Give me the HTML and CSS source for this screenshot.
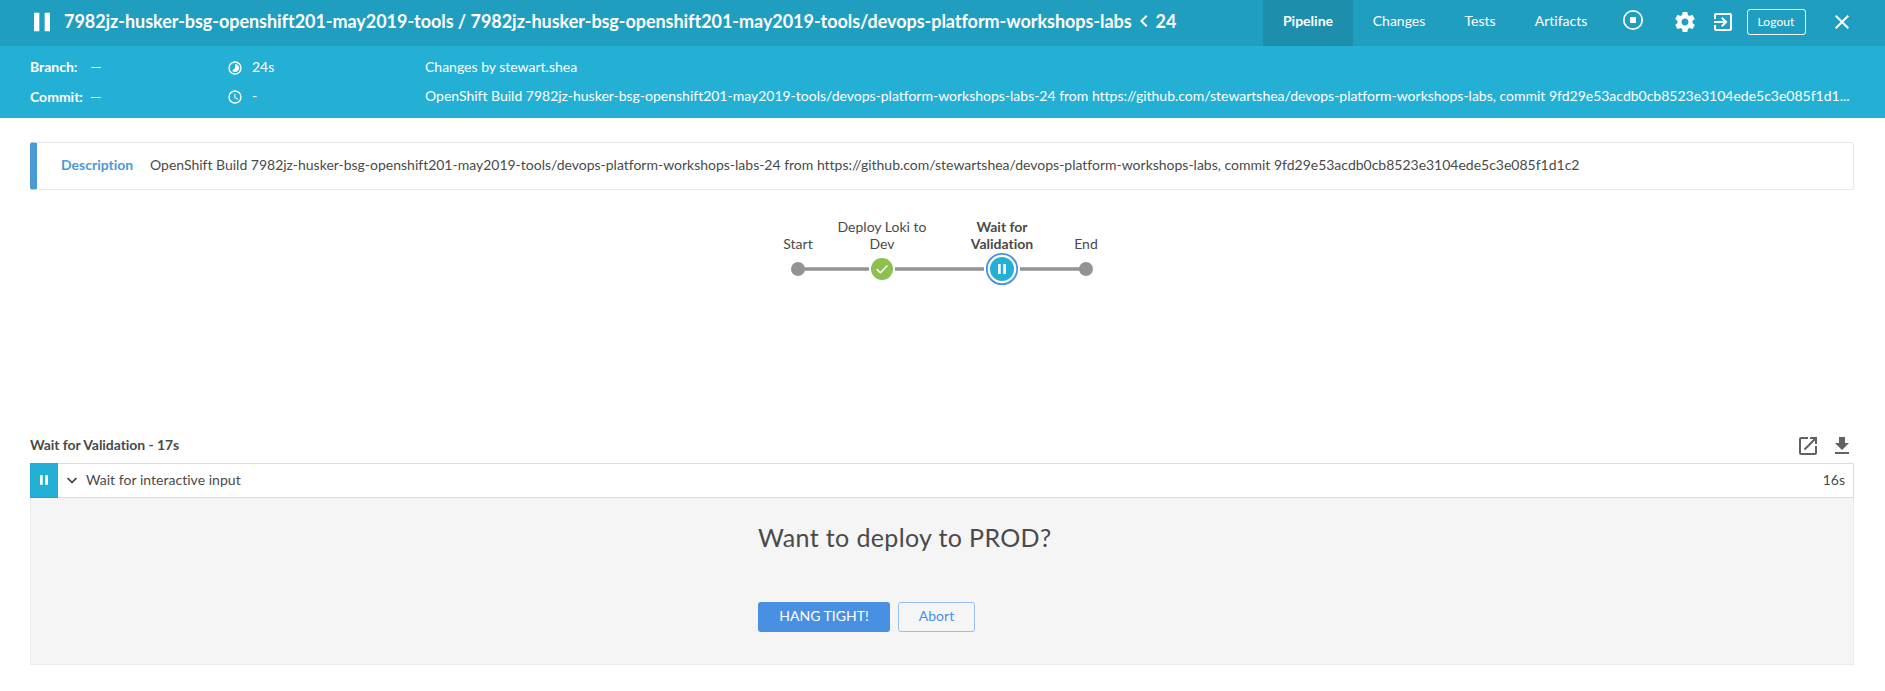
FILE: index.html
```html
<!DOCTYPE html>
<html lang="en">
<head>
<meta charset="utf-8">
<title>Pipeline run 24</title>
<link rel="stylesheet" href="styles.css">
</head>
<body>
<header class="topbar">
  <svg class="run-status" width="32" height="32" viewBox="0 0 24 24"><path d="M6 5h4v14H6zM14 5h4v14h-4z"/></svg>
  <h1 class="title"><span>7982jz-husker-bsg-openshift201-may2019-tools / 7982jz-husker-bsg-openshift201-may2019-tools/devops-platform-workshops-labs</span><svg class="chevron" width="24" height="24" viewBox="0 0 24 24"><path d="M15.4 7.4 14 6l-6 6 6 6 1.400-1.400L10.800 12z"/></svg><span>24</span></h1>
  <nav class="tabs">
    <a class="tab tab-active">Pipeline</a>
    <a class="tab tab-changes">Changes</a>
    <a class="tab tab-tests">Tests</a>
    <a class="tab tab-artifacts">Artifacts</a>
  </nav>
  <div class="actions">
    <svg class="stop" width="24" height="24" viewBox="0 0 24 24"><circle cx="12" cy="12" r="9.200" fill="none" stroke="#fff" stroke-width="1.700"/><path d="M9 9h6v6H9z"/></svg>
    <svg class="gear" width="24" height="24" viewBox="0 0 24 24"><path d="M19.43 12.98c.04-.32.07-.64.07-.98s-.03-.66-.07-.98l2.110-1.650c.19-.15.24-.42.12-.64l-2-3.460c-.12-.22-.39-.3-.61-.22l-2.490 1c-.52-.4-1.080-.73-1.690-.98l-.38-2.650C14.460 2.180 14.250 2 14 2h-4c-.25 0-.46.18-.49.42l-.38 2.650c-.61.25-1.170.59-1.690.98l-2.490-1c-.23-.09-.49 0-.61.22l-2 3.460c-.13.22-.07.49.12.64l2.110 1.650c-.04.32-.07.65-.07.98s.03.66.07.98l-2.110 1.650c-.19.15-.24.42-.12.64l2 3.460c.12.22.39.3.61.22l2.490-1c.52.4 1.080.73 1.690.98l.38 2.650c.03.24.24.42.49.42h4c.25 0 .46-.18.49-.42l.38-2.650c.61-.25 1.170-.59 1.690-.98l2.490 1c.23.09.49 0 .61-.22l2-3.460c.12-.22.07-.49-.12-.64l-2.110-1.650zM12 15.500c-1.930 0-3.500-1.570-3.500-3.500s1.570-3.500 3.500-3.500 3.500 1.570 3.500 3.500-1.570 3.500-3.500 3.500z"/></svg>
    <svg class="exit" width="24" height="24" viewBox="0 0 24 24"><path d="M10.090 15.590 11.500 17l5-5-5-5-1.410 1.410L12.670 11H3v2h9.670l-2.580 2.590zM19 3H5c-1.110 0-2 .9-2 2v4h2V5h14v14H5v-4H3v4c0 1.100.89 2 2 2h14c1.100 0 2-.9 2-2V5c0-1.100-.9-2-2-2z"/></svg>
    <button class="logout">Logout</button>
    <svg class="close" width="24" height="24" viewBox="0 0 24 24"><path d="M19 6.410 17.590 5 12 10.590 6.410 5 5 6.410 10.590 12 5 17.590 6.410 19 12 13.410 17.590 19 19 17.590 13.410 12z"/></svg>
  </div>
</header>

<section class="summary">
  <div class="col-source">
    <div class="line"><b class="key">Branch:</b><span class="dash-branch">—</span></div>
    <div class="line line-commit"><b class="key">Commit:</b><span class="dash-commit">—</span></div>
  </div>
  <div class="col-time">
    <div class="line"><svg width="16" height="16" viewBox="0 0 24 24"><path d="M16.240 7.750A5.970 5.970 0 0 0 12 6v6l-4.240 4.240c2.340 2.340 6.140 2.340 8.490 0a5.990 5.990 0 0 0-.01-8.490zM12 2a10 10 0 1 0 0 20 10 10 0 0 0 0-20zm0 18a8 8 0 1 1 0-16 8 8 0 0 1 0 16z"/></svg><span>24s</span></div>
    <div class="line"><svg width="16" height="16" viewBox="0 0 24 24"><path d="M12 2a10 10 0 1 0 0 20 10 10 0 0 0 0-20zm0 18a8 8 0 1 1 0-16 8 8 0 0 1 0 16zM12.500 7H11v6l5.250 3.150.75-1.230-4.500-2.670z"/></svg><span>-</span></div>
  </div>
  <div class="col-cause">
    <div class="line">Changes by stewart.shea</div>
    <div class="line long-text">OpenShift Build 7982jz-husker-bsg-openshift201-may2019-tools/devops-platform-workshops-labs-24 from https://github.com/stewartshea/devops-platform-workshops-labs, commit 9fd29e53acdb0cb8523e3104ede5c3e085f1d1...</div>
  </div>
</section>

<main class="content">
  <section class="description"><b class="description-label">Description</b><span class="long-text">OpenShift Build 7982jz-husker-bsg-openshift201-may2019-tools/devops-platform-workshops-labs-24 from https://github.com/stewartshea/devops-platform-workshops-labs, commit 9fd29e53acdb0cb8523e3104ede5c3e085f1d1c2</span></section>

  <section class="graph">
    <div class="labels">
      <span>Start</span>
      <span>Deploy Loki to<br>Dev</span>
      <span class="current">Wait for<br>Validation</span>
      <span>End</span>
    </div>
    <svg width="324" height="36" viewBox="0 0 324 36">
      <path d="M18 18h71M115 18h89M240 18h66" stroke="#949393" stroke-width="3.500"/>
      <circle cx="18" cy="18" r="7" fill="#949393"/>
      <circle cx="102" cy="18" r="11" fill="#8cc04f"/>
      <path d="m96.800 18.200 3.600 3.600 7-7.200" fill="none" stroke="#fff" stroke-width="1.500"/>
      <circle cx="222" cy="18" r="15.200" fill="#fff" stroke="#4a90e2" stroke-width="1.800"/>
      <circle cx="222" cy="18" r="12" fill="#24b0d5"/>
      <path d="M218 13h2.700v10H218zM223.300 13h2.700v10h-2.700z" fill="#fff"/>
      <circle cx="306" cy="18" r="7" fill="#949393"/>
    </svg>
  </section>

  <section class="log">
    <div class="log-head">
      <h2 class="log-title">Wait for Validation - 17s</h2>
      <div class="log-tools">
        <svg width="24" height="24" viewBox="0 0 24 24"><path d="M19 19H5V5h7V3H5a2 2 0 0 0-2 2v14a2 2 0 0 0 2 2h14c1.100 0 2-.9 2-2v-7h-2v7zM14 3v2h3.590l-9.830 9.830 1.410 1.410L19 6.410V10h2V3h-7z"/></svg>
        <svg width="24" height="24" viewBox="0 0 24 24"><path d="M19 9h-4V3H9v6H5l7 7 7-7zM5 18v2h14v-2H5z"/></svg>
      </div>
    </div>
    <div class="step">
      <div class="step-status"><svg width="16" height="16" viewBox="0 0 16 16"><path d="M4 3.200h2.700v9.600H4zM9.300 3.200H12v9.600H9.300z"/></svg></div>
      <svg class="step-arrow" width="20" height="20" viewBox="0 0 24 24"><path d="M7.410 7.840 12 12.420l4.590-4.580L18 9.250l-6 6-6-6z"/></svg>
      <span class="step-name">Wait for interactive input</span>
      <span class="step-time">16s</span>
    </div>
    <div class="input-panel">
      <h3 class="question">Want to deploy to PROD?</h3>
      <div class="buttons">
        <button class="btn btn-primary">HANG TIGHT!</button>
        <button class="btn btn-secondary">Abort</button>
      </div>
    </div>
  </section>
</main>
</body>
</html>
```
FILE: styles.css
```css
* { box-sizing: border-box; }
body {
  margin: 0;
  background: #fff;
  color: #4a4a4a;
  font: 14px/20px Lato, sans-serif;
  font-variant-ligatures: none;
}
svg { display: block; flex: none; }
h1, h2, h3 { margin: 0; }
button { font-family: inherit; font-variant-ligatures: none; }
.long-text { letter-spacing: -0.008px; }

.topbar {
  display: flex;
  height: 46px;
  padding-left: 26px;
  background: #209ebf;
  color: #fff;
}
.topbar svg { fill: #fff; }
.run-status { margin-top: 6px; }
.title {
  display: flex;
  align-items: center;
  height: 42px;
  margin-left: 6px;
  font-size: 18px;
  line-height: 24px;
  letter-spacing: -0.045px;
  white-space: nowrap;
}
.tabs { display: flex; margin-left: auto; }
.tab {
  width: 90px;
  padding-top: 11px;
  text-align: center;
}
.tab-active { background: #1d8eac; font-weight: 700; }
.tab-changes { width: 92px; }
.tab-tests { width: 70px; }
.tab-artifacts { width: 92px; }
.actions { display: flex; width: 278px; padding-top: 8px; }
.stop { margin-left: 13.500px; }
.gear { margin: 2px 0 0 28px; }
.exit { margin: 2px 0 0 14px; }
.logout {
  width: 59px;
  height: 26px;
  margin: 1px 0 0 12px;
  padding: 0 0 1px;
  border: 1px solid #fff;
  border-radius: 3px;
  background: transparent;
  color: #fff;
  font-size: 12px;
  letter-spacing: 0.1px;
}
.close { margin: 2px 0 0 24px; }

.summary {
  display: flex;
  height: 72px;
  padding: 11px 30px 0;
  background: #24b0d5;
  color: #fff;
}
.summary svg { margin-top: 2px; fill: #fff; }
.line { display: flex; align-items: center; height: 20px; margin-bottom: 9px; white-space: nowrap; }
.line-commit { margin-top: 10px; }
.col-source { width: 197px; }
.key { margin-right: 7px; }
.dash-branch { margin-left: 6px; }
.col-time { width: 198px; }
.col-time span { margin-left: 9px; }
.col-cause { flex: 1; min-width: 0; }

.content { padding: 24px 31px 0 30px; }
.description {
  display: flex;
  align-items: center;
  height: 48px;
  padding: 0 0 2px 24px;
  border: 1px solid #e6e7ec;
  border-left: 7px solid #4a9ad4;
  border-radius: 3px;
  white-space: nowrap;
}
.description-label { width: 89px; color: #4a9ad4; }

.graph { width: 336px; height: 240px; margin-left: 750px; padding-top: 28px; }
.labels {
  display: grid;
  grid-template-columns: 36px 132px 108px 60px;
  height: 33px;
  align-items: end;
  justify-items: center;
  text-align: center;
  line-height: 17px;
  white-space: nowrap;
}
.current { font-weight: 700; }

.log-head { display: flex; justify-content: space-between; height: 33px; }
.log-title { font-size: 14px; line-height: 30px; letter-spacing: -0.06px; }
.log-tools { display: flex; gap: 10px; padding-top: 4px; fill: #616161; }
.step {
  display: flex;
  align-items: center;
  height: 35px;
  padding-right: 8px;
  border: 1px solid #ddd;
  border-left: 0;
}
.step-status {
  display: grid;
  place-items: center;
  width: 28px;
  height: 35px;
  border-bottom: 1px solid #209ebf;
  background: #24b0d5;
  fill: #fff;
}
.step-arrow { margin: 0 4px; fill: #4a4a4a; }
.step-name, .step-time { padding-bottom: 1px; }
.step-name { letter-spacing: 0.03px; }
.step-time { margin-left: auto; }
.input-panel {
  height: 167px;
  padding: 23px 0 0 727px;
  border: 1px solid #ebebeb;
  border-top: 0;
  background: #f5f5f5;
}
.question { font-size: 25px; line-height: 32px; font-weight: 400; letter-spacing: 0.36px; }
.buttons { display: flex; gap: 8px; margin-top: 49px; }
.btn { height: 30px; padding: 0 0 3px; border-radius: 3px; font-size: 14px; }
.btn-primary { width: 132px; border: 0; background: #4a90e2; color: #fff; }
.btn-secondary { width: 77px; border: 1px solid #95bfee; background: transparent; color: #4a90e2; }
```
